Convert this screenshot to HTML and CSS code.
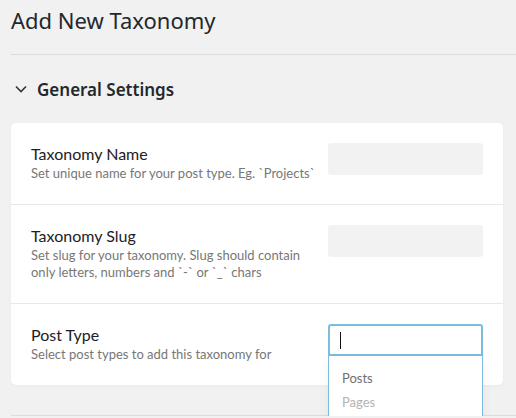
FILE: index.html
```
<!DOCTYPE html>
<html lang="en">
<head>
  <meta charset="UTF-8">
  <meta name="viewport" content="width=device-width, initial-scale=1.0">
  <title>Add New Taxonomy</title>
  <link rel="stylesheet" href="styles.css">
</head>
<body>
  <div class="wrap">
    <h1 class="page-title">Add New Taxonomy</h1>
    <hr class="sep">

    <div class="section-head">
      <svg class="chevron" width="12" height="8" viewBox="0 0 12 8">
        <path d="M1 1.5 L6 6.5 L11 1.5" fill="none" stroke="#32373c" stroke-width="1.6"/>
      </svg>
      <span>General Settings</span>
    </div>

    <div class="card">
      <div class="row">
        <div class="label">
          <div class="label-title">Taxonomy Name</div>
          <div class="label-desc">Set unique name for your post type. Eg. `Projects`</div>
        </div>
        <div class="control">
          <input type="text" class="field">
        </div>
      </div>

      <div class="row">
        <div class="label">
          <div class="label-title">Taxonomy Slug</div>
          <div class="label-desc">Set slug for your taxonomy. Slug should contain only letters, numbers and `-` or `_` chars</div>
        </div>
        <div class="control">
          <input type="text" class="field">
        </div>
      </div>

      <div class="row">
        <div class="label">
          <div class="label-title">Post Type</div>
          <div class="label-desc">Select post types to add this taxonomy for</div>
        </div>
        <div class="control">
          <div class="field field-focus"><span class="caret"></span></div>
          <ul class="dropdown">
            <li class="opt">Posts</li>
            <li class="opt opt-muted">Pages</li>
          </ul>
        </div>
      </div>
    </div>

    <hr class="sep sep-bottom">
  </div>
</body>
</html>
```

FILE: styles.css
```
body {
  margin: 0;
  background-color: #f1f1f1;
  font-family: "Noto Sans", "Open Sans", sans-serif;
  color: #23282d;
  overflow: hidden;
}

.wrap {
  padding-left: 11px;
}

.page-title {
  margin: 0;
  padding-top: 4px;
  font-size: 22px;
  font-weight: 400;
  line-height: 32px;
}

.sep {
  margin: 18px 0 0 0;
  border: 0;
  border-top: 1px solid #dcdcdc;
}

.section-head {
  display: flex;
  align-items: center;
  gap: 10px;
  height: 34px;
  margin-top: 17px;
  padding-left: 4px;
  font-size: 17px;
  font-weight: 600;
}

.chevron {
  display: block;
}

.card {
  margin: 17px 13px 0 0;
  background: #fff;
  border-radius: 5px;
  box-shadow: 0 1px 3px rgba(0, 0, 0, 0.04);
}

.row {
  display: flex;
  gap: 8px;
  padding: 20px 20px 22px;
  border-bottom: 1px solid #e8e8e8;
  font-family: Lato, "Noto Sans", sans-serif;
}

.row:last-child {
  border-bottom: 0;
}

.label {
  flex: 1;
}

.label-title {
  font-size: 16px;
  font-weight: 400;
  line-height: 22px;
  color: #1d2125;
}

.label-desc {
  font-size: 13px;
  line-height: 17px;
  color: #777;
}

.control {
  position: relative;
  flex: 0 0 155px;
}

.field {
  display: block;
  box-sizing: border-box;
  width: 155px;
  height: 32px;
  margin: 0;
  border: 0;
  border-radius: 3px;
  background: #f2f2f2;
}

.field-focus {
  position: relative;
  background: #fff;
  border: 2px solid #7dbcde;
  border-radius: 3px 3px 0 0;
}

.caret {
  position: absolute;
  left: 10px;
  top: 6px;
  width: 1px;
  height: 17px;
  background: #111;
}

.dropdown {
  position: absolute;
  left: 0;
  top: 32px;
  width: 155px;
  box-sizing: border-box;
  margin: 0;
  padding: 10px 0 20px;
  list-style: none;
  background: #fff;
  border: 1px solid #7dbcde;
  border-top: 0;
  box-shadow: 0 4px 10px rgba(0, 0, 0, 0.06);
}

.opt {
  padding: 2px 13px;
  font-size: 13px;
  line-height: 20px;
  color: #6f6f6f;
}

.opt-muted {
  color: #b3b3b3;
}

.sep-bottom {
  margin-top: 30px;
}
```
